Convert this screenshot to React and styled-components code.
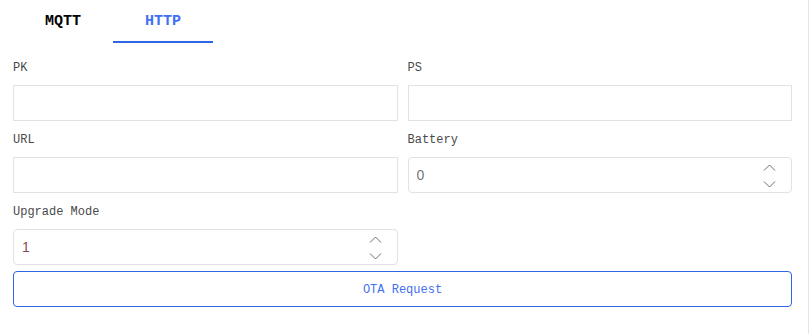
import React, { useState } from 'react'
import styled, { createGlobalStyle } from 'styled-components'

const GlobalStyle = createGlobalStyle`
  html, body {
    margin: 0;
    padding: 0;
    background: #fff;
  }
  body {
    font-family: 'Liberation Mono', 'DejaVu Sans Mono', monospace;
  }
`

const Page = styled.div`
  width: 808px;
  height: 334px;
  border-right: 1px solid #e4e5e9;
  box-sizing: content-box;
`

const Tabs = styled.div`
  display: flex;
  padding-left: 13px;
  height: 43px;
`

const Tab = styled.div`
  width: 100px;
  height: 40px;
  display: flex;
  align-items: center;
  justify-content: center;
  padding-top: 1px;
  font-size: 15px;
  font-weight: bold;
  color: ${(p) => (p.$active ? '#3f6ff2' : '#000')};
  border-bottom: 2px solid ${(p) => (p.$active ? '#2f66e6' : 'transparent')};
  cursor: pointer;
`

const Form = styled.div`
  padding: 15px 16px 0 13px;
  display: grid;
  grid-template-columns: 1fr 1fr;
  column-gap: 10px;
  row-gap: 9px;
`

const Field = styled.div`
  display: flex;
  flex-direction: column;
  gap: 7px;
`

const Label = styled.label`
  font-size: 12px;
  line-height: 20px;
  color: #4a4a4a;
`

const TextInput = styled.input`
  box-sizing: border-box;
  height: 36px;
  width: 100%;
  border: 1px solid #e2e2e2;
  border-radius: 0;
  padding: 0 8px;
  font-family: inherit;
  font-size: 13px;
  outline: none;
`

const NumberBox = styled.div`
  box-sizing: border-box;
  height: 36px;
  border: 1px solid #e0e2e8;
  border-radius: 4px;
  display: flex;
  align-items: center;
  padding: 0 15px 0 8px;
`

const NumberValue = styled.input`
  flex: 1;
  border: none;
  outline: none;
  padding: 0;
  font-family: 'Liberation Sans', Arial, sans-serif;
  font-size: 14px;
  color: ${(p) => p.$tone || '#777'};
  background: transparent;
`

const Spinner = styled.div`
  display: flex;
  flex-direction: column;
  align-items: center;
  gap: 10px;
  padding-top: 1px;
  color: #6b6f7a;
`

const Button = styled.button`
  grid-column: 1 / -1;
  margin-top: -3px;
  height: 36px;
  border: 1px solid #2f66e6;
  border-radius: 4px;
  background: #fff;
  color: #3f6ff2;
  font-family: inherit;
  font-size: 12px;
  padding-top: 3px;
  cursor: pointer;
`

const Chevron = ({ up }) => (
  <svg width="13" height="7" viewBox="0 0 13 7" fill="none">
    <path
      d={up ? 'M1 6.5 L6.5 1 L12 6.5' : 'M1 0.5 L6.5 6 L12 0.5'}
      stroke="currentColor"
      strokeWidth="1"
    />
  </svg>
)

const NumberField = ({ value, tone }) => (
  <NumberBox>
    <NumberValue $tone={tone} defaultValue={value} />
    <Spinner>
      <Chevron up />
      <Chevron />
    </Spinner>
  </NumberBox>
)

const App = () => {
  const [tab, setTab] = useState('HTTP')
  return (
    <Page>
      <GlobalStyle />
      <Tabs>
        {['MQTT', 'HTTP'].map((t) => (
          <Tab key={t} $active={tab === t} onClick={() => setTab(t)}>
            {t}
          </Tab>
        ))}
      </Tabs>
      <Form>
        <Field>
          <Label>PK</Label>
          <TextInput />
        </Field>
        <Field>
          <Label>PS</Label>
          <TextInput />
        </Field>
        <Field>
          <Label>URL</Label>
          <TextInput />
        </Field>
        <Field>
          <Label>Battery</Label>
          <NumberField value="0" />
        </Field>
        <Field>
          <Label>Upgrade Mode</Label>
          <NumberField value="1" tone="#8a4a5c" />
        </Field>
        <div />
        <Button>OTA Request</Button>
      </Form>
    </Page>
  )
}

export default App
